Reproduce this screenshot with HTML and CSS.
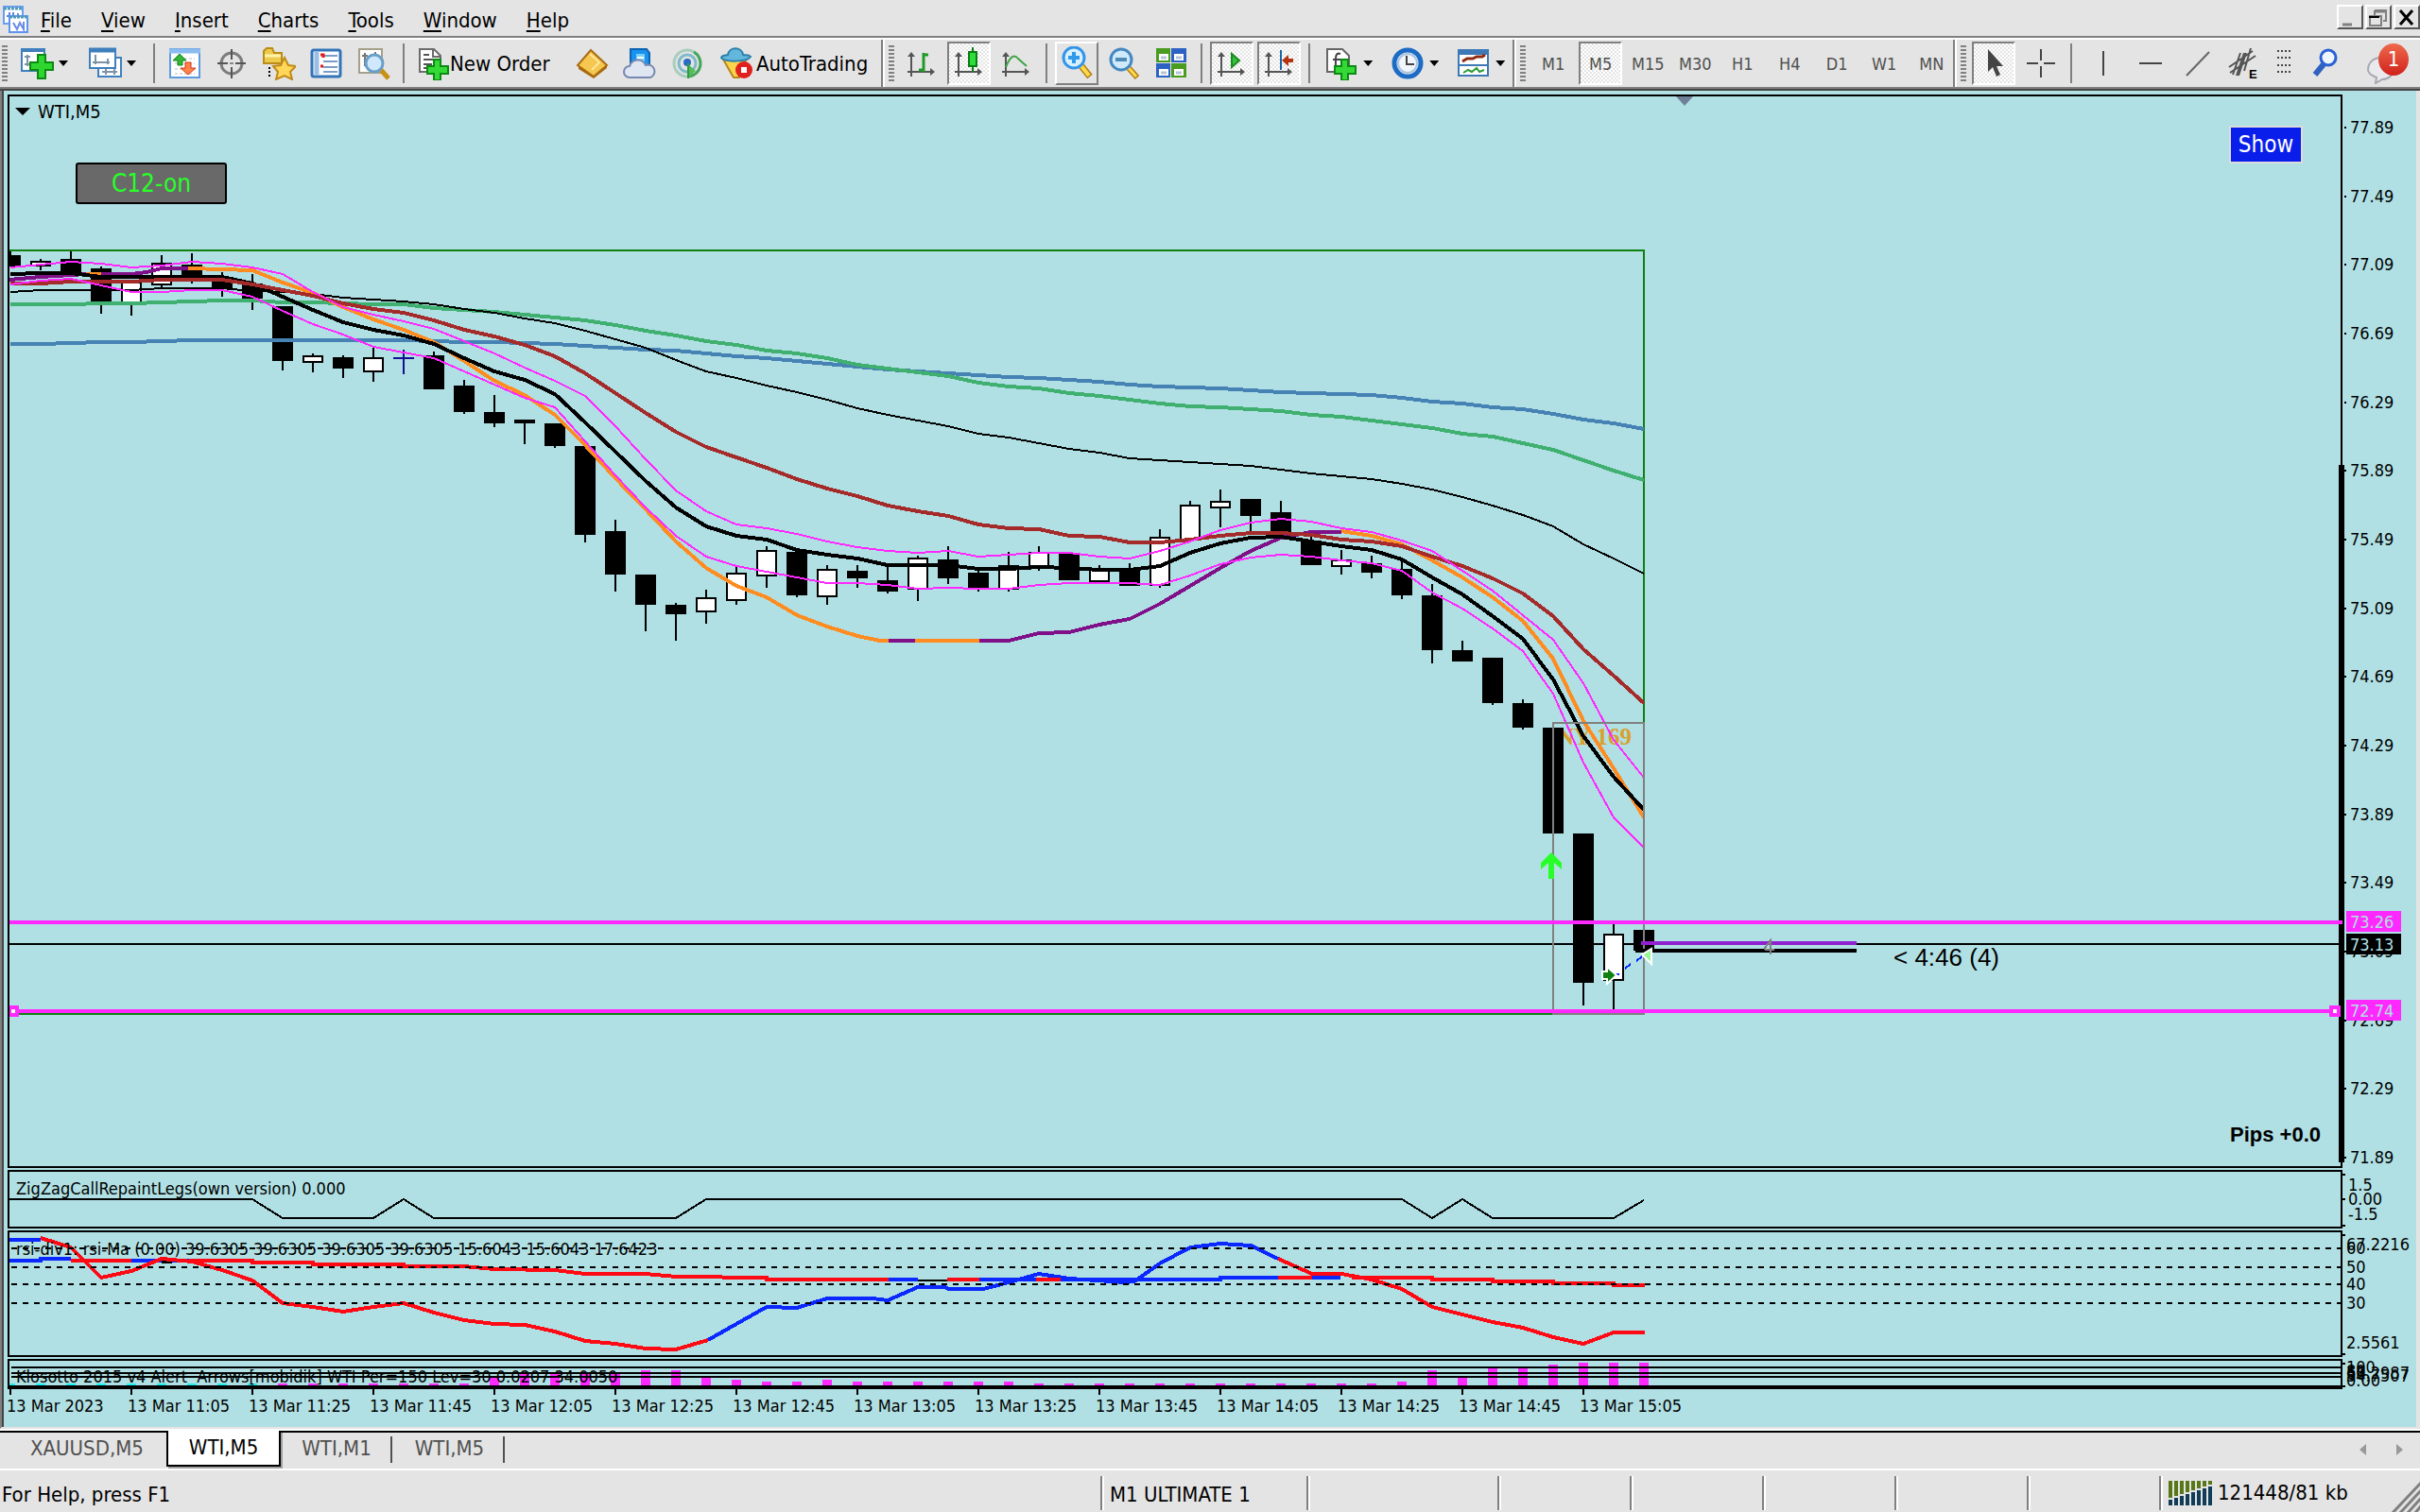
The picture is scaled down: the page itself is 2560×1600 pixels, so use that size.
FILE: index.html
```html
<!DOCTYPE html>
<html lang="en">

<head>
    <meta charset="UTF-8">
    <meta name="viewport" content="width=device-width, initial-scale=1.0">
    <title>WTI,M5</title>
    <link rel="stylesheet" href="styles.css">
</head>

<body>
    <!-- Menu bar -->
    <header class="menubar">
        <svg class="app-icon" width="28" height="30" viewBox="0 0 28 30">
            <rect x="2" y="2" width="20" height="18" fill="#fff" stroke="#6a9ef0" stroke-width="2" />
            <path d="M2 4h20" stroke="#4f9bb8" stroke-width="3" stroke-dasharray="3 1" />
            <path d="M5 12h3v-4v8M12 8v7M17 9v4" stroke="#5b84e0" stroke-width="2" fill="none" />
            <rect x="8" y="12" width="19" height="17" fill="#fff" stroke="#5f94ee" stroke-width="2" />
            <path d="M8 13h19" stroke="#4f9bb8" stroke-width="3" stroke-dasharray="3 1" />
            <path d="M12 19l4 7 3-7 4 7V18" stroke="#6b8be6" stroke-width="2" fill="none" />
        </svg>
        <nav class="menu">
            <button><u>F</u>ile</button>
            <button><u>V</u>iew</button>
            <button><u>I</u>nsert</button>
            <button><u>C</u>harts</button>
            <button><u>T</u>ools</button>
            <button><u>W</u>indow</button>
            <button><u>H</u>elp</button>
        </nav>
        <div class="window-buttons">
            <button aria-label="Minimize"><svg width="24" height="24"><path d="M4 19h10" stroke="#808080" stroke-width="3" /></svg></button>
            <button aria-label="Restore"><svg width="24" height="24"><path d="M8 4h12v11h-3M8 4v5" stroke="#808080" stroke-width="2" fill="none" /><path d="M8 5h12" stroke="#808080" stroke-width="3" /><path d="M3 10h12v10H3z" stroke="#808080" stroke-width="2" fill="none" /><path d="M2 11h11" stroke="#000" stroke-width="2" /></svg></button>
            <button aria-label="Close"><svg width="24" height="24"><path d="M5 4l13 15M18 4L5 19" stroke="#000" stroke-width="3" /></svg></button>
        </div>
    </header>

    <!-- Toolbars -->
    <div class="toolbars">
        <div class="toolbar standard">
            <span class="grip"></span>
            <button class="tool drop" aria-label="New chart">
                <svg width="36" height="36"><rect x="1" y="3" width="24" height="23" fill="#fff" stroke="#3f7fbd" stroke-width="2" /><path d="M0 4h26" stroke="#3f7fbd" stroke-width="4" /><path d="M7 9v12M4 11h6M4 19h10" stroke="#7d93a8" stroke-width="2" /><path d="M18 9h8v8h8v8h-8v9h-8v-9h-8v-8h8z" fill="#2fd62f" stroke="#0b8a14" stroke-width="2" /></svg>
                <i class="caret"></i>
            </button>
            <button class="tool drop" aria-label="Profiles">
                <svg width="36" height="36"><rect x="10" y="12" width="24" height="20" fill="#fff" stroke="#3f7fbd" stroke-width="2" /><rect x="1" y="3" width="27" height="20" fill="#fff" stroke="#3f7fbd" stroke-width="2" /><path d="M0 4h29" stroke="#3f7fbd" stroke-width="5" /><path d="M7 9v10M4 17h18M20 13v6M14 27h16M18 24v6M27 24v6" stroke="#7d93a8" stroke-width="2" /></svg>
                <i class="caret"></i>
            </button>
            <span class="sep"></span>
            <button class="tool" aria-label="Market Watch">
                <svg width="36" height="36"><rect x="3" y="3" width="31" height="30" fill="#fff" stroke="#5c9be0" stroke-width="2" /><path d="M2 5h33" stroke="#8bbcf0" stroke-width="5" /><path d="M8 13h21M8 18h21M8 24h21M8 29h21" stroke="#ddd" stroke-width="2" stroke-dasharray="3 2" /><path d="M13 8l7 7h-4v5h-5v-5H6z" fill="#35b535" stroke="#15851a" /><path d="M22 30l-8-7h5v-6h6v6h5z" fill="#ff8248" stroke="#d0391a" /></svg>
            </button>
            <button class="tool" aria-label="Data Window">
                <svg width="36" height="36"><circle cx="18" cy="18" r="11" fill="none" stroke="#7d7d7d" stroke-width="3" /><path d="M18 3v11M18 22v12M3 18h11M22 18h11" stroke="#555" stroke-width="2" /><path d="M16 18h4" stroke="#888" stroke-width="2" /></svg>
            </button>
            <button class="tool" aria-label="Navigator">
                <svg width="36" height="36"><path d="M2 5l3-3h6l2 5h8v11H2z" fill="#ecca4b" stroke="#bb8b17" stroke-width="2" /><path d="M3 10h17" stroke="#fff2ac" stroke-width="3" /><path d="M8 22v12" stroke="#000" stroke-width="2" stroke-dasharray="2 2" /><path d="M24 12l4 8 8 1-6 6 2 8-8-4-9 4 2-8-5-6 8-1z" fill="#ffd75a" stroke="#c18a16" stroke-width="2" /></svg>
            </button>
            <button class="tool" aria-label="Terminal">
                <svg width="36" height="36"><rect x="3" y="4" width="30" height="28" rx="2" fill="#fff" stroke="#3274b8" stroke-width="3" /><path d="M8 5v26" stroke="#9bbfe4" stroke-width="5" /><path d="M15 10h15M15 16h15M15 22h15M15 27h15" stroke="#7c9cc8" stroke-width="2" /><path d="M12 9h3v3M12 21h3" stroke="#e01b1b" stroke-width="3" fill="none" /></svg>
            </button>
            <button class="tool" aria-label="Strategy Tester">
                <svg width="36" height="36"><path d="M3 3h24v25H3z" fill="#fff" stroke="#a5a08a" stroke-width="2" /><path d="M9 7v14M6 10h6M20 6v9" stroke="#777" stroke-width="2" /><path d="M26 25l8 9" stroke="#c99016" stroke-width="5" /><circle cx="19" cy="18" r="9" fill="#cfe8fb" stroke="#6a9fc9" stroke-width="3" /></svg>
            </button>
            <span class="sep"></span>
            <button class="tool labelled new-order">
                <svg width="34" height="36"><path d="M2 3h15l7 7v17H2z" fill="#fff" stroke="#6c6c6c" stroke-width="2" /><path d="M16 3v8h8" fill="none" stroke="#6c6c6c" stroke-width="2" /><path d="M6 9h6M6 14h11M6 19h9M6 23h6" stroke="#555" stroke-width="2" /><path d="M17 14h7v7h8v8h-8v7h-7v-7h-7v-8h7z" fill="#35d935" stroke="#0b8a14" stroke-width="2" /></svg>
                New Order
            </button>
            <button class="tool" aria-label="MetaEditor">
                <svg width="36" height="36"><path d="M16 4L33 20 19 32 2 20z" fill="#f5c650" stroke="#a86d12" stroke-width="2" /><path d="M3 21l16 11 14-12v3L19 34 3 24z" fill="#a9690c" /><path d="M15 8l10 9-8 8" fill="none" stroke="#ffe69b" stroke-width="2" /></svg>
            </button>
            <button class="tool" aria-label="Virtual Hosting">
                <svg width="36" height="36"><path d="M8 3h17l3 4v14H8z" fill="#1a93ee" stroke="#0e62b3" stroke-width="2" /><path d="M14 8h9v9h-9z" fill="#79cffb" /><path d="M15 12h7" stroke="#fff" stroke-width="2" /><path d="M7 33a6 6 0 0 1 0-12 9 9 0 0 1 17-1 6 6 0 0 1 5 13z" fill="#dfe6f2" stroke="#7689b1" stroke-width="2" /></svg>
            </button>
            <button class="tool" aria-label="Signals">
                <svg width="36" height="36"><g fill="none" stroke-width="3"><circle cx="18" cy="18" r="14" stroke="#a9cdbd" /><circle cx="18" cy="18" r="9" stroke="#7fb9ca" /><path d="M25 6a14 14 0 0 1-5 26" stroke="#43a65a" /></g><path d="M18 18l9 8-8 7z" fill="#55bb5c" /><circle cx="18" cy="17" r="4" fill="#286bc6" /><path d="M19 18v16" stroke="#2e9d3c" stroke-width="2" /></svg>
            </button>
            <button class="tool labelled">
                <svg width="36" height="36"><path d="M4 12h26l-8 21h-6z" fill="#fbd44d" stroke="#b9861b" stroke-width="2" /><path d="M3 12c3 5 27 5 31-1-3-3-5-1-8-2-1-9-15-9-16 0-3 1-6 0-7 3z" fill="#63b7dc" stroke="#2c7fa9" stroke-width="2" /><circle cx="27" cy="25" r="9" fill="#e01f1f" /><path d="M24 22h6v6h-6z" fill="#fff" /></svg>
                AutoTrading
            </button>
        </div>

        <div class="toolbar charts">
            <span class="grip"></span>
            <button class="tool" aria-label="Bar Chart">
                <svg width="36" height="36"><use href="#axes" /><path d="M20 7v20M20 9h5M15 25h5" stroke="#1f9b27" stroke-width="3" /></svg>
            </button>
            <button class="tool pressed" aria-label="Candlesticks">
                <svg width="36" height="36"><use href="#axes" /><path d="M22 1v26" stroke="#0b7d14" stroke-width="2" /><rect x="18" y="6" width="8" height="15" fill="#2fdc3a" stroke="#0b7d14" stroke-width="2" /></svg>
            </button>
            <button class="tool" aria-label="Line Chart">
                <svg width="36" height="36"><use href="#axes" /><path d="M7 22c5-12 9-14 13-9l9 8" fill="none" stroke="#3fa545" stroke-width="2" /></svg>
            </button>
            <span class="sep"></span>
            <button class="tool raised" aria-label="Zoom In">
                <svg width="36" height="36"><path d="M23 21l9 11" stroke="#b27e12" stroke-width="7" /><path d="M23 21l8 10" stroke="#ffd94e" stroke-width="4" /><circle cx="15" cy="12" r="11" fill="#d9f0ff" stroke="#3395ea" stroke-width="3" /><path d="M15 6v12M9 12h12" stroke="#2f9bea" stroke-width="4" /></svg>
            </button>
            <button class="tool" aria-label="Zoom Out">
                <svg width="36" height="36"><path d="M23 23l9 10" stroke="#b27e12" stroke-width="6" /><path d="M23 23l8 9" stroke="#ffd94e" stroke-width="3" /><circle cx="15" cy="14" r="11" fill="#cfeafd" stroke="#4488c0" stroke-width="3" /><path d="M9 14h12" stroke="#4b8bb5" stroke-width="4" /></svg>
            </button>
            <button class="tool" aria-label="Tile Windows">
                <svg width="36" height="36"><path d="M2 2h15v15H2zM18 18h16v15H18z" fill="#4a9c20" /><path d="M18 2h16v15H18zM2 18h15v15H2z" fill="#2b62c4" /><path d="M5 8h10v7H5zM21 8h10v7H21zM5 24h10v7H5zM21 24h10v7H21z" fill="#fff" /><path d="M7 12h6M23 12h6M7 28h6M23 28h6" stroke="#b7c3d8" stroke-width="3" /></svg>
            </button>
            <span class="sep"></span>
            <button class="tool pressed" aria-label="Auto Scroll">
                <svg width="36" height="36"><use href="#axes" /><path d="M18 8l8 7-8 7z" fill="#37c13d" stroke="#1b8a22" stroke-width="2" /></svg>
            </button>
            <button class="tool pressed" aria-label="Chart Shift">
                <svg width="36" height="36"><use href="#axes" /><path d="M20 4v21" stroke="#1c66a4" stroke-width="2" /><path d="M21 15l7-6v4h5v4h-5v4z" fill="#b5330f" /></svg>
            </button>
            <span class="sep"></span>
            <button class="tool drop" aria-label="Indicators">
                <svg width="36" height="36"><path d="M2 3h16l7 7v17H2z" fill="#fff" stroke="#666" stroke-width="2" /><path d="M16 8c-6-2-5 4-5 14M8 14h8" fill="none" stroke="#444" stroke-width="2" /><path d="M17 14h7v7h8v8h-8v7h-7v-7h-7v-8h7z" fill="#35d935" stroke="#0b8a14" stroke-width="2" /></svg>
                <i class="caret"></i>
            </button>
            <button class="tool drop" aria-label="Periods">
                <svg width="36" height="36"><circle cx="17" cy="18" r="14" fill="#f1f6fb" stroke="#1c6bc4" stroke-width="5" /><circle cx="17" cy="18" r="10" fill="none" stroke="#a9c4df" stroke-width="2" /><path d="M16 10v9h8" fill="none" stroke="#444" stroke-width="2" /></svg>
                <i class="caret"></i>
            </button>
            <button class="tool drop" aria-label="Templates">
                <svg width="36" height="36"><rect x="1" y="4" width="31" height="27" fill="#fff" stroke="#3d79b6" stroke-width="2" /><path d="M0 6h33" stroke="#3d79b6" stroke-width="6" /><path d="M1 20h31" stroke="#3d79b6" stroke-width="2" /><path d="M5 16l5-3h6l4-2 6 0 3-2" fill="none" stroke="#8e2a12" stroke-width="3" /><path d="M6 28l5-3 4 2 5-4 3 4 5-2" fill="none" stroke="#2f9b38" stroke-width="2" /></svg>
                <i class="caret"></i>
            </button>
        </div>

        <div class="toolbar periods">
            <span class="grip"></span>
            <button class="tool">M1</button>
            <button class="tool pressed">M5</button>
            <button class="tool">M15</button>
            <button class="tool">M30</button>
            <button class="tool">H1</button>
            <button class="tool">H4</button>
            <button class="tool">D1</button>
            <button class="tool">W1</button>
            <button class="tool">MN</button>
        </div>

        <div class="toolbar last">
            <span class="grip"></span>
            <button class="tool pressed" aria-label="Cursor">
                <svg width="36" height="36"><path d="M12 3v24l5-5 4 10 4-2-4-9h7z" fill="#444" /></svg>
            </button>
            <button class="tool" aria-label="Crosshair">
                <svg width="36" height="36"><path d="M18 3v12M18 21v12M3 18h12M21 18h12" stroke="#444" stroke-width="2" /></svg>
            </button>
            <span class="sep"></span>
            <button class="tool" aria-label="Vertical Line">
                <svg width="36" height="36"><path d="M20 5v26" stroke="#444" stroke-width="2" /></svg>
            </button>
            <button class="tool" aria-label="Horizontal Line">
                <svg width="36" height="36"><path d="M8 18h24" stroke="#444" stroke-width="2" /></svg>
            </button>
            <button class="tool" aria-label="Trendline">
                <svg width="36" height="36"><path d="M8 31L32 6" stroke="#666" stroke-width="2" /></svg>
            </button>
            <button class="tool" aria-label="Equidistant Channel">
                <svg width="36" height="36"><path d="M3 22L28 5M4 28L31 10M7 30L15 7M13 31L21 7M19 26L26 2M11 31L19 7" stroke="#555" stroke-width="2" /><text class="mini" x="24" y="34">E</text></svg>
            </button>
            <button class="tool dots" aria-label="Fibonacci">
                <svg width="18" height="36"><path d="M1 5h16M1 12h16M1 20h16M1 27h16" stroke="#444" stroke-width="2" stroke-dasharray="2 2" shape-rendering="crispEdges" /></svg>
            </button>
            <button class="tool search" aria-label="Search">
                <svg width="36" height="36"><path d="M15 19L6 30" stroke="#2f62c0" stroke-width="6" /><circle cx="20" cy="12" r="8" fill="#eef5ff" stroke="#2c62d6" stroke-width="3" /></svg>
            </button>
            <button class="tool alerts" aria-label="Notifications">
                <svg width="46" height="44"><path d="M3 29c0-7 5-13 14-13s13 5 13 12-6 11-12 11l-7 4 1-6C7 35 3 33 3 29z" fill="#e9e9ee" stroke="#a8a8b0" stroke-width="2" /></svg>
                <span class="badge">1</span>
            </button>
        </div>
    </div>

    <!-- Chart window -->
    <main class="chart">
        <div class="panel price">
            <div class="plot">
                <svg class="draw" id="price-plot"></svg>
                <span class="symbol"><i class="caret"></i>WTI,M5</span>
                <button class="c12">C12-on</button>
                <button class="show">Show</button>
                <span class="pips">Pips +0.0</span>
            </div>
            <svg class="axis" id="price-axis"></svg>
        </div>
        <div class="panel zigzag">
            <div class="plot"><svg class="draw" id="zigzag-plot"></svg></div>
            <svg class="axis" id="zigzag-axis"></svg>
        </div>
        <div class="panel rsi">
            <div class="plot"><svg class="draw" id="rsi-plot"></svg></div>
            <svg class="axis" id="rsi-axis"></svg>
        </div>
        <div class="panel klosotto">
            <div class="plot"><svg class="draw" id="klosotto-plot"></svg></div>
            <svg class="axis" id="klosotto-axis"></svg>
        </div>
        <svg class="time-axis" id="time-axis"></svg>
    </main>

    <!-- Chart tabs -->
    <nav class="tabs">
        <button class="tab">XAUUSD,M5</button>
        <button class="tab active">WTI,M5</button>
        <button class="tab">WTI,M1</button>
        <button class="tab">WTI,M5</button>
        <span class="tab-scroll">
            <button aria-label="Scroll left"><svg width="8" height="12"><path d="M7 0v12L0 6z" fill="#999" /></svg></button>
            <button aria-label="Scroll right"><svg width="8" height="12"><path d="M1 0v12l7-6z" fill="#999" /></svg></button>
        </span>
    </nav>

    <!-- Status bar -->
    <footer class="status">
        <span class="help">For Help, press F1</span>
        <span class="cell profile">M1 ULTIMATE 1</span>
        <span class="cell bar-time"></span>
        <span class="cell"></span>
        <span class="cell"></span>
        <span class="cell"></span>
        <span class="cell"></span>
        <span class="cell"></span>
        <span class="cell traffic">
            <svg width="48" height="26" id="traffic-bars"></svg>
            121448/81 kb
        </span>
        <svg class="size-grip" width="30" height="32"><path d="M0 34L32 0M8 34L34 6M16 34L34 14M24 34L34 22" stroke="#808080" stroke-width="3" /></svg>
    </footer>

    <svg class="defs" width="0" height="0">
        <defs>
            <g id="axes">
                <path d="M7 8v24M3 27h27" stroke="#555" stroke-width="2" />
                <path d="M3 11h8L7 6zM27 23v8l5-4z" fill="#555" />
            </g>
        </defs>
    </svg>

    <script src="script.js"></script>
</body>

</html>
```
FILE: styles.css
```css
/* General Styles */
* {
    box-sizing: border-box;
}

body {
    margin: 0;
    height: 100vh;
    display: flex;
    flex-direction: column;
    overflow: hidden;
    background-color: #e4e4e4;
    color: #000;
    font-family: "DejaVu Sans Condensed", "DejaVu Sans", sans-serif;
    font-stretch: condensed;
    font-size: 22px;
}

button {
    margin: 0;
    padding: 0;
    border: none;
    background: none;
    color: inherit;
    font: inherit;
}

svg {
    flex: none;
    display: block;
}

.defs {
    position: absolute;
}

.caret {
    width: 10px;
    height: 6px;
    background-color: #000;
    clip-path: polygon(0 0, 100% 0, 50% 100%);
}

/* Menu bar */
.menubar {
    display: flex;
    align-items: center;
    height: 42px;
    padding-left: 2px;
    border-bottom: 2px solid #fff;
    box-shadow: inset 0 -2px #808080;
}

.menu {
    display: flex;
    flex: 1;
    gap: 31px;
    padding: 2px 0 0 13px;
}

.menu u {
    text-underline-offset: 3px;
    text-decoration-thickness: 2px;
}

.window-buttons {
    display: flex;
    gap: 2px;
    padding: 0 0 4px;
}

.window-buttons button {
    width: 28px;
    height: 26px;
    border: 2px solid;
    border-color: #fff #555 #555 #fff;
    overflow: hidden;
}

/* Toolbars */
.toolbars {
    display: flex;
    height: 54px;
    border-bottom: 2px solid #444;
    box-shadow: inset 0 -2px #808080;
}

.toolbar {
    display: flex;
    align-items: center;
    gap: 4px;
    height: 50px;
    padding-left: 4px;
    border-left: 2px solid #fff;
    border-right: 2px solid #808080;
}

.toolbar.standard {
    padding: 0 8px 0 2px;
    border-left: none;
}

.toolbar.last {
    flex: 1;
    padding-right: 12px;
    border-right: none;
}

.grip {
    width: 8px;
    height: 38px;
    border-right: 2px solid transparent;
    background: repeating-linear-gradient(#808080 0 2px, transparent 2px 4px) content-box;
}

.sep {
    width: 2px;
    height: 42px;
    margin: 0 4px;
    background-color: #808080;
}

.tool {
    position: relative;
    display: flex;
    align-items: center;
    justify-content: center;
    width: 46px;
    height: 46px;
    border: 2px solid transparent;
}

.tool.pressed {
    border-color: #808080 #fff #fff #808080;
    background: repeating-conic-gradient(#fff 0 25%, #e4e4e4 0 50%) 0 0 / 4px 4px;
}

.tool.raised {
    border-color: #fff #808080 #808080 #fff;
}

.tool.drop {
    justify-content: flex-start;
    gap: 4px;
    width: 68px;
    padding-left: 6px;
}

.charts .tool.drop {
    width: 66px;
}

.tool.labelled {
    justify-content: flex-start;
    gap: 4px;
    width: auto;
    padding: 0 4px;
}

.tool.new-order {
    gap: 0;
    width: 164px;
}

.periods {
    color: #505050;
    font-size: 18px;
}

.mini {
    font: bold 13px "Liberation Sans", sans-serif;
}

.tool.dots {
    width: 34px;
}

.tool.alerts {
    margin-left: auto;
}

.badge {
    position: absolute;
    top: 0;
    right: -2px;
    width: 32px;
    height: 34px;
    border-radius: 50%;
    background: linear-gradient(#ee6a4c, #d0211b);
    color: #fff;
    line-height: 34px;
    text-align: center;
}

/* Chart window */
.chart {
    flex: 1;
    display: flex;
    flex-direction: column;
    gap: 2px;
    min-height: 0;
    padding: 4px 0 0 4px;
    border-left: 2px solid #808080;
    border-right: 4px solid #e4e4e4;
    border-bottom: 2px solid #e4e4e4;
    box-shadow: inset 2px 0 #444;
    background-color: #b0e0e4;
    font-size: 18px;
}

.panel {
    display: flex;
    padding-left: 2px;
}

.plot {
    position: relative;
    flex: 1;
    min-width: 0;
    border: 2px solid #000;
}

.draw {
    width: 100%;
    height: 100%;
}

/* The scale reaches back over the frame of the plot */
.axis {
    position: relative;
    width: 78px;
    height: 100%;
    overflow: visible;
}

.chart text {
    white-space: pre;
}

.price {
    flex: 1;
    min-height: 0;
}

.zigzag {
    height: 62px;
}

.rsi {
    height: 134px;
}

.klosotto {
    height: 32px;
}

.klosotto .plot {
    border-bottom-width: 4px;
}

.time-axis {
    width: 100%;
    height: 40px;
    margin-top: -2px;
}

/* Objects lying over the price plot */
.symbol {
    position: absolute;
    left: 6px;
    top: 4px;
    display: flex;
    align-items: center;
    gap: 8px;
    font-size: 20px;
}

.symbol .caret {
    width: 16px;
    height: 8px;
}

.c12 {
    position: absolute;
    left: 70px;
    top: 70px;
    width: 160px;
    height: 44px;
    border: 2px solid #000;
    border-radius: 3px;
    background-color: #696969;
    color: #28ff28;
    font-size: 26px;
}

.show {
    position: absolute;
    right: 40px;
    top: 31px;
    width: 78px;
    height: 40px;
    border: 2px solid #dcdcdc;
    background-color: #0a1eeb;
    color: #fff;
    font-size: 24px;
}

.pips {
    position: absolute;
    right: 21px;
    bottom: 20px;
    font: bold 22px "Liberation Sans", sans-serif;
}

.inverse {
    fill: #b0e0e4;
}

.timer {
    font: 26px "Liberation Sans", sans-serif;
}

.session {
    font: bold 25px "Liberation Serif", serif;
    fill: #daa02c;
}

/* Chart tabs */
.tabs {
    display: flex;
    height: 44px;
    padding: 0 10px;
    border-top: 2px solid #fff;
    border-bottom: 2px solid #fff;
    box-shadow: inset 0 2px #000;
    color: #505050;
}

.tab {
    height: 38px;
    padding: 0 22px 2px;
    border-right: 2px solid transparent;
}

.tab:not(.active) ~ .tab:not(.active) {
    background: linear-gradient(#505050, #505050) 100% 60% / 2px 28px no-repeat;
}

.tab.active {
    border: 2px solid #000;
    border-top: none;
    background-color: #fff;
    box-shadow: 2px 2px #a0a0a0;
    color: #000;
}

.tab-scroll {
    display: flex;
    gap: 30px;
    margin-left: auto;
    padding-right: 8px;
}

/* Status bar */
.status {
    position: relative;
    display: flex;
    height: 44px;
    padding: 6px 0 2px;
    line-height: 40px;
}

.help {
    flex: 1;
    padding-left: 2px;
}

.cell {
    width: 140px;
    border-left: 2px solid #808080;
    box-shadow: inset 2px 0 #fff;
}

.cell.profile {
    width: 218px;
    padding-left: 8px;
}

.cell.bar-time {
    width: 202px;
}

.cell.traffic {
    display: flex;
    align-items: center;
    gap: 4px;
    width: 276px;
    padding-left: 8px;
}

.size-grip {
    position: absolute;
    right: 0;
    bottom: 0;
}
```
FILE: script.js
```js
const BLACK = '#000', MAGENTA = '#ff28ff', BLUE = '#0a28ff', RED = '#ff0a14';
const STEP = 32; // distance between two bars
const barX = i => 1 + i * STEP;

function add(svg, tag, attrs, text) {
    const el = document.createElementNS('http://www.w3.org/2000/svg', tag);
    for (const key in attrs) el.setAttribute(key, attrs[key]);
    if (text !== undefined) el.textContent = text;
    svg.appendChild(el);
    return el;
}

// Group whose origin is shifted, so that the y values below are screen values
function layer(id, top) {
    return add(document.getElementById(id), 'g', { transform: `translate(0,${-top})` });
}

function rect(g, x, y, w, h, fill) {
    add(g, 'rect', { x, y, width: w, height: h, fill, 'shape-rendering': 'crispEdges' });
}

function box(g, x, y, w, h, stroke) {
    add(g, 'rect', { x, y, width: w, height: h, fill: 'none', stroke, 'stroke-width': 2, 'shape-rendering': 'crispEdges' });
}

function line(g, stroke, width, points) {
    add(g, 'polyline', { points, fill: 'none', stroke, 'stroke-width': width, 'shape-rendering': 'crispEdges' });
}

// One y value for each bar
function series(g, stroke, width, values, first = 0) {
    line(g, stroke, width, values.map((y, i) => `${barX(first + i)},${y}`).join(' '));
}

/* ---- Price panel ---- */
const price = layer('price-plot', 102);

add(price, 'text', { x: 1637, y: 788, class: 'session' }, 'NY 169');
rect(price, 0, 264, 1730, 2, '#108010');
rect(price, 1728, 264, 2, 500, '#108010');
rect(price, 0, 1072, 1634, 2, '#108010');
rect(price, 0, 998, '100%', 2, BLACK);

// type, high, top, bottom, low
const candles = [
    ['b', 266, 270, 282, 282], ['w', 274, 276, 282, 286], ['b', 266, 274, 290, 290], ['b', 282, 284, 320, 332],
    ['w', 298, 298, 321, 334], ['w', 270, 278, 302, 304], ['b', 268, 280, 292, 300], ['b', 288, 296, 305, 314],
    ['b', 290, 300, 316, 328], ['b', 324, 324, 382, 392], ['w', 374, 376, 384, 394], ['b', 376, 378, 390, 400],
    ['w', 368, 378, 394, 404], ['d', 370, 378, 380, 396], ['b', 372, 376, 412, 412], ['b', 402, 408, 436, 438],
    ['b', 418, 436, 448, 452], ['b', 444, 444, 448, 470], ['b', 448, 448, 472, 474], ['b', 472, 472, 566, 574],
    ['b', 550, 562, 608, 626], ['b', 608, 608, 640, 668], ['b', 638, 640, 650, 678], ['w', 624, 632, 648, 660],
    ['w', 600, 606, 636, 640], ['w', 578, 582, 610, 622], ['b', 584, 584, 630, 632], ['w', 598, 602, 632, 640],
    ['b', 598, 604, 612, 622], ['b', 598, 614, 626, 628], ['w', 588, 590, 624, 636], ['b', 578, 592, 612, 618],
    ['b', 602, 606, 622, 626], ['w', 584, 598, 624, 626], ['w', 578, 584, 600, 604], ['b', 586, 586, 614, 614],
    ['w', 598, 602, 616, 616], ['b', 596, 604, 620, 620], ['w', 560, 568, 620, 622], ['w', 530, 534, 572, 572],
    ['w', 518, 530, 538, 558], ['b', 528, 528, 546, 564], ['b', 530, 542, 566, 566], ['b', 566, 572, 598, 598],
    ['w', 582, 592, 600, 608], ['b', 588, 596, 606, 612], ['b', 594, 602, 630, 634], ['b', 618, 630, 688, 702],
    ['b', 678, 688, 700, 700], ['b', 696, 696, 744, 746], ['b', 740, 744, 770, 772], ['b', 770, 770, 882, 882],
    ['b', 882, 882, 1040, 1064], ['w', 978, 988, 1038, 1068], ['b', 984, 984, 1006, 1006]
];

candles.forEach(([type, high, top, bottom, low], i) => {
    const x = barX(i), color = type === 'd' ? '#101090' : BLACK;
    rect(price, x - 1, high, 2, low - high, color);
    rect(price, x - 11, top, 22, bottom - top, color);
    if (type === 'w') rect(price, x - 9, top + 2, 18, bottom - top - 4, '#fff');
});

// Moving averages
series(price, '#4682b4', 4, [
    364, 364, 363, 362, 362, 361, 360, 360, 360, 360, 360, 360, 360, 360, 361, 362, 362, 363, 364, 366, 368, 370, 371, 374,
    377, 379, 382, 385, 388, 391, 393, 395, 397, 399, 400, 402, 404, 407, 409, 410, 411, 413, 415, 416, 417, 418, 421, 425,
    427, 431, 433, 438, 444, 448, 454]);
series(price, '#40b070', 4, [
    322, 322, 322, 321, 321, 320, 319, 318, 318, 320, 320, 321, 322, 322, 326, 328, 330, 333, 336, 339, 344, 350, 355, 361,
    365, 371, 374, 379, 386, 390, 394, 398, 405, 409, 411, 416, 419, 423, 427, 430, 431, 433, 435, 439, 441, 445, 449, 453,
    459, 462, 469, 476, 487, 498, 508]);
series(price, BLACK, 2, [
    309, 307, 307, 307, 307, 305, 305, 305, 308, 309, 311, 315, 317, 319, 322, 327, 331, 337, 342, 350, 359, 368, 381, 393,
    400, 408, 415, 423, 432, 439, 445, 451, 459, 463, 469, 475, 479, 485, 487, 489, 491, 493, 497, 501, 504, 507, 512, 518,
    526, 535, 545, 557, 576, 591, 607]);

const trend = [
    ['#801088', '0,296 33,293 65,291 81,290'],
    ['#ff8c20', '81,290 97,290'],
    ['#801088', '97,290 129,290 145,288 161,284 189,284'],
    ['#ff8c20', '189,284 225,285 257,286 289,299 321,310 353,325 385,338 417,349 449,362 481,382 513,403 545,418 577,439 609,471 641,506 673,539 705,573 737,601 769,620 801,632 833,651 865,663 897,673 921,678 930,678'],
    ['#801088', '930,678 958,678'],
    ['#ff8c20', '958,678 1026,678'],
    ['#801088', '1026,678 1057,678 1089,670 1121,669 1153,661 1185,655 1217,639 1249,620 1281,601 1313,583 1345,569 1377,563 1409,563'],
    ['#ff8c20', '1409,562 1441,567 1473,576 1505,593 1537,611 1569,632 1601,657 1633,697 1665,763 1697,813 1729,865']
];
trend.forEach(([color, points]) => line(price, color, 4, points));

series(price, BLACK, 4, [
    290, 289, 289, 293, 293, 293, 293, 293, 300, 314, 328, 341, 349, 355, 364, 379, 393, 402, 417, 447, 478, 509, 537, 557,
    567, 571, 582, 587, 591, 598, 598, 598, 602, 602, 600, 601, 603, 603, 599, 585, 575, 569, 568, 573, 578, 582, 592, 611,
    629, 652, 676, 719, 779, 822, 857]);
series(price, '#a52a2a', 4, [
    300, 300, 298, 298, 298, 296, 296, 296, 301, 307, 313, 321, 327, 331, 339, 349, 356, 365, 377, 395, 416, 437, 457, 473,
    484, 495, 507, 517, 525, 535, 541, 546, 555, 559, 560, 567, 568, 574, 574, 571, 567, 564, 564, 566, 571, 573, 578, 589,
    599, 612, 628, 652, 687, 715, 744]);
series(price, MAGENTA, 2, [
    283, 280, 277, 279, 283, 281, 277, 279, 283, 290, 309, 325, 333, 340, 348, 361, 374, 389, 403, 419, 451, 486, 519, 541,
    555, 559, 565, 573, 579, 583, 585, 583, 589, 587, 585, 585, 589, 591, 583, 573, 561, 553, 549, 552, 559, 563, 572, 583,
    604, 625, 651, 677, 723, 783, 823]);
series(price, MAGENTA, 2, [
    301, 297, 295, 302, 309, 309, 307, 307, 314, 329, 343, 354, 367, 373, 379, 393, 407, 421, 431, 467, 503, 537, 567, 589,
    599, 605, 611, 617, 617, 619, 623, 622, 623, 623, 619, 617, 617, 617, 619, 609, 597, 590, 587, 589, 593, 596, 604, 627,
    644, 665, 689, 734, 807, 865, 897]);

// Levels and trade marks
box(price, 1633, 765, 96, 308, '#808080');
rect(price, 0, 974, '100%', 4, MAGENTA);
rect(price, 0, 1068, '100%', 4, MAGENTA);
rect(price, 0, 1064, 10, 12, MAGENTA);
rect(price, 2, 1068, 4, 4, '#fff');
rect(price, 1726, 996, 228, 4, '#9020d0');
rect(price, 1720, 1004, 234, 4, BLACK);
add(price, 'path', { d: 'M1631 902l11 11v7l-8-7v17h-6v-17l-8 7v-7z', fill: '#28ff28' });
line(price, BLUE, 2, '1696,1032 1703,1031');
line(price, BLUE, 2, '1709,1025 1715,1020');
line(price, BLUE, 2, '1721,1017 1727,1012');
add(price, 'path', { d: 'M1685 1028h5v-5l10 9-10 9v-5h-5z', fill: '#108010', stroke: '#fff', 'stroke-width': 2 });
add(price, 'path', { d: 'M1727 1010l10-6v16z', fill: '#98f898', stroke: '#fff', 'stroke-width': 2 });
line(price, '#808080', 2, '1857,1005 1857,1003 1863,995 1863,1010');
line(price, '#808080', 2, '1857,1005 1867,1005');
add(price, 'text', { x: 1993, y: 1022, class: 'timer' }, '< 4:46 (4)');
add(price, 'path', { d: 'M1763 102h18l-9 10z', fill: '#708098' });

const priceAxis = layer('price-axis', 100);
rect(priceAxis, -4, 492, 6, 738, BLACK);
['77.89', '77.49', '77.09', '76.69', '76.29', '75.89', '75.49', '75.09', '74.69', '74.29', '73.89', '73.49', '73.09',
    '72.69', '72.29', '71.89'].forEach((label, i) => {
        const y = 135 + Math.round(i * 72.67);
        rect(priceAxis, 2, y - 1, 2, 2, BLACK);
        add(priceAxis, 'text', { x: 8, y: y + 6 }, label);
    });
[['73.26', 964, MAGENTA], ['73.13', 988, BLACK], ['72.74', 1058, MAGENTA]].forEach(([label, y, color]) => {
    rect(priceAxis, 4, y, 58, 22, color);
    add(priceAxis, 'text', { x: 8, y: y + 18, class: 'inverse' }, label);
});
rect(priceAxis, -14, 1064, 12, 12, MAGENTA);
rect(priceAxis, -4, 974, 4, 4, MAGENTA);
rect(priceAxis, -10, 1068, 4, 4, '#fff');

/* ---- Zigzag panel ---- */
const zigzag = layer('zigzag-plot', 1240);
line(zigzag, BLACK, 2, '0,1269 257,1269 289,1289 385,1289 417,1269 449,1289 705,1289 737,1269 1473,1269 1505,1289 1537,1269 1569,1289 1697,1289 1729,1270');
add(zigzag, 'text', { x: 7, y: 1264 }, 'ZigZagCallRepaintLegs(own version) 0.000');

const zigzagAxis = layer('zigzag-axis', 1238);
[['1.5', 1254], ['0.00', 1269], ['-1.5', 1285]].forEach(([label, y]) => add(zigzagAxis, 'text', { x: 6, y: y + 6 }, label));
[1243, 1269, 1297].forEach(y => rect(zigzagAxis, 0, y - 1, 3, 2, BLACK));

/* ---- RSI panel ---- */
const rsi = layer('rsi-plot', 1304);
const rsiLines = [
    [BLUE, '0,1334 33,1334 33,1332 65,1332'],
    [RED, '65,1334 129,1334'],
    [BLUE, '129,1334 161,1334'],
    [BLACK, '161,1335 172,1335'],
    [BLUE, '172,1334 190,1334'],
    [RED, '190,1334 257,1334 257,1336 321,1336 321,1338 417,1338 417,1340 481,1340 513,1343 577,1344 609,1348 673,1348 705,1351 801,1352 801,1354 930,1354'],
    [BLUE, '0,1312 33,1312'],
    [RED, '33,1310 65,1320 97,1352 129,1345 161,1332 193,1335 225,1344 257,1355 289,1379 321,1383 353,1388 385,1383 417,1379 449,1389 481,1397 513,1401 545,1402 577,1409 609,1419 641,1422 673,1427 705,1428 739,1418'],
    [BLUE, '739,1418 769,1401 801,1383 833,1384 865,1374 913,1374 929,1376 961,1362 990,1362 993,1364 1030,1364 1057,1357 1089,1348 1121,1353 1180,1357 1190,1356 1217,1337 1249,1320 1281,1316 1313,1318 1342,1332'],
    [BLUE, '930,1354 961,1354'],
    [RED, '992,1354 1026,1354'],
    [BLUE, '1026,1354 1086,1354'],
    [RED, '1086,1354 1112,1354'],
    [BLUE, '1112,1354 1281,1354 1281,1352 1342,1352'],
    [RED, '1342,1332 1378,1348 1409,1348 1441,1354 1473,1364 1505,1383 1537,1391 1569,1399 1601,1405 1633,1415 1665,1422 1697,1410 1730,1410'],
    [RED, '1342,1352 1378,1352'],
    [BLUE, '1378,1352 1408,1352'],
    [RED, '1420,1352 1505,1352 1505,1354 1569,1354 1569,1356 1633,1356 1633,1358 1697,1358 1697,1360 1730,1360']
];
rsiLines.forEach(([color, points]) => line(rsi, color, 4, points));
line(rsi, BLACK, 2, '961,1355 992,1355');
[1321, 1341, 1359, 1379].forEach(y => add(rsi, 'line', {
    x1: 2, y1: y, x2: '100%', y2: y, stroke: BLACK, 'stroke-width': 2, 'stroke-dasharray': '6 6', 'shape-rendering': 'crispEdges'
}));
add(rsi, 'text', { x: 7, y: 1328 }, 'rsi-div1: rsi-Ma (0.00) 39.6305 39.6305 39.6305 39.6305 15.6043 15.6043 17.6423');

const rsiAxis = layer('rsi-axis', 1302);
[['67.2216', 1317], ['60', 1321], ['50', 1341], ['40', 1359], ['30', 1379], ['2.5561', 1421]].forEach(([label, y]) =>
    add(rsiAxis, 'text', { x: 4, y: y + 6 }, label));
[1307, 1433].forEach(y => rect(rsiAxis, 0, y - 1, 3, 2, BLACK));

/* ---- Klosotto panel ---- */
const klosotto = layer('klosotto-plot', 1440);
const heights = [
    2, 2, 2, 2, 2, 2, 2, 2, 2, 2, 2, 2, 2, 2, 2, 2, 8, 12, 12, 12, 14, 16, 16, 8, 6, 4, 4, 6, 4, 4, 4, 4, 4, 4,
    2, 2, 2, 2, 2, 2, 2, 2, 2, 2, 2, 2, 4, 16, 8, 18, 18, 22, 24, 24, 24];
heights.forEach((h, i) => rect(klosotto, barX(i) - 5, 1466 - h, 10, h, i < 9 ? '#20f0f0' : MAGENTA));
[1446, 1452, 1456].forEach(y => rect(klosotto, 2, y, '100%', 2, BLACK));
add(klosotto, 'text', { x: 7, y: 1463 }, 'Klosotto 2015 v4 Alert  Arrows[mobidik] WTI Per=150 Lev=30 0.0207 34.0050');

const klosottoAxis = layer('klosotto-axis', 1438);
[['100', 1447], ['80', 1451], ['60', 1454], ['34.7507', 1456], ['57.2987', 1453], ['0.00', 1461]].forEach(([label, y]) =>
    add(klosottoAxis, 'text', { x: 4, y: y + 6 }, label));
[1443, 1467].forEach(y => rect(klosottoAxis, 0, y - 1, 3, 2, BLACK));

/* ---- Time axis ---- */
const timeAxis = document.getElementById('time-axis');
['13 Mar 2023', '13 Mar 11:05', '13 Mar 11:25', '13 Mar 11:45', '13 Mar 12:05', '13 Mar 12:25', '13 Mar 12:45',
    '13 Mar 13:05', '13 Mar 13:25', '13 Mar 13:45', '13 Mar 14:05', '13 Mar 14:25', '13 Mar 14:45', '13 Mar 15:05'
].forEach((label, i) => {
    rect(timeAxis, 4 + i * 128, 0, 2, 6, BLACK);
    add(timeAxis, 'text', { x: 1 + i * 128, y: 24 }, label);
});

/* ---- Connection bars in the status bar ---- */
const traffic = document.getElementById('traffic-bars');
for (let i = 0; i < 8; i++) {
    rect(traffic, i * 6, 0, 4, 18 - i * 2, '#587818');
    rect(traffic, i * 6, 20 - i * 2, 4, 6 + i * 2, '#103c58');
}
```
